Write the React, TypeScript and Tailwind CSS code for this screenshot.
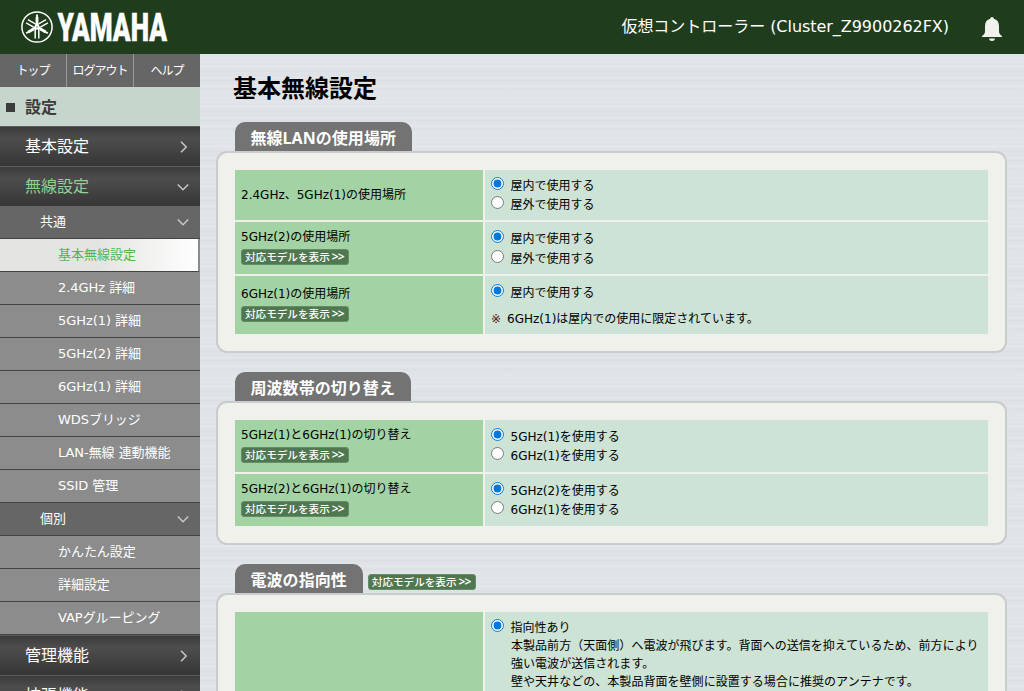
import { useState } from 'react'

const subMenu = ['基本無線設定', '2.4GHz 詳細', '5GHz(1) 詳細', '5GHz(2) 詳細', '6GHz(1) 詳細', 'WDSブリッジ', 'LAN-無線 連動機能', 'SSID 管理']
const subMenu2 = ['かんたん設定', '詳細設定', 'VAPグルーピング']

function Logo() {
  return (
    <div className="flex items-center">
      <svg width="32" height="32" viewBox="0 0 32 32" fill="none" stroke="#fff">
        <circle cx="16" cy="16" r="15.100" strokeWidth="1.500" />
        {/* three crossed tuning forks */}
        {[0, 120, 240].map((a) => (
          <g key={a} transform={`rotate(${a} 16 16)`}>
            <path d="M16 3.500V15" strokeWidth="1.900" />
            <path d="M16 6v6" strokeWidth="2.800" />
            <path d="M14.200 27.500V15.500q1.800-2 3.600 0v12" strokeWidth="1.500" />
          </g>
        ))}
        <circle cx="16" cy="16" r="1.500" strokeWidth="1" />
      </svg>
      <svg width="114" height="54" viewBox="0 0 114 54" className="ml-1">
        <text x="0.500" y="40.500" textLength="109.500" lengthAdjust="spacingAndGlyphs" fill="#fff" stroke="#fff" strokeWidth="0.400" fontFamily="Roboto, sans-serif" fontSize="38" fontWeight="900">YAMAHA</text>
      </svg>
    </div>
  )
}

function Chevron({ down }: { down?: boolean }) {
  return (
    <svg width="12" height="12" viewBox="0 0 12 12" fill="none" stroke="#c8c8c8" strokeWidth="1.500">
      <path d={down ? 'M0.800 3.500 6 8.700 11.200 3.500' : 'M4 0.800 9.200 6 4 11.200'} />
    </svg>
  )
}

function MainItem({ label, open }: { label: string; open?: boolean }) {
  return (
    <div className="flex h-10 shrink-0 items-center justify-between border-t border-[#5a5a5a] bg-linear-to-b from-[#3c3c3c] via-[#4d4d4d] via-30% to-[#363636] pr-[11px] pl-[25px] text-[16px] leading-6">
      <span className={open ? 'text-[#91cf94]' : 'text-white'}>{label}</span>
      <Chevron down={open} />
    </div>
  )
}

function GroupItem({ label }: { label: string }) {
  return (
    <div className="flex h-[33px] items-center justify-between border-b border-[#444] bg-[#666] pr-[11px] pl-10 text-[13px] text-white">
      <span>{label}</span>
      <Chevron down />
    </div>
  )
}

function SubItem({ label, active }: { label: string; active?: boolean }) {
  return (
    <div
      className={
        active
          ? 'flex h-[33px] items-center border-r-2 border-b border-r-[#8c8c8c] border-b-[#444] bg-linear-to-r from-[#e4e4e2] from-50% to-white pl-[58px] text-[13px] text-[#4fb84f]'
          : 'flex h-[33px] items-center border-b border-[#444] bg-[#8c8c8c] pl-[58px] text-[13px] tracking-[-0.05px] text-white'
      }
    >
      {label}
    </div>
  )
}

function ModelButton() {
  return (
    <button className="flex h-4 w-[108px] items-center rounded-[3px] border border-[#658d65] bg-[#507850] pl-[3px] text-[10.6px] leading-none font-medium whitespace-nowrap text-white">
      対応モデルを表示
      <span className="ml-[2px] font-['Noto_Sans',sans-serif] text-[12px] font-semibold tracking-[-0.9px]">&gt;&gt;</span>
    </button>
  )
}

function Section({ title, button, className, children }: { title: string; button?: boolean; className: string; children: React.ReactNode }) {
  return (
    <section className={className}>
      <div className="ml-[19px] flex h-[29px]">
        <h2 className="rounded-t-[10px] bg-[#737373] pr-4 pl-[15.5px] font-['Noto_Sans','Noto_Sans_CJK_JP',sans-serif] text-[16px] leading-[32px] font-bold tracking-[0.05px] text-white">{title}</h2>
        {button && (
          <div className="mt-[10px] ml-[5px]">
            <ModelButton />
          </div>
        )}
      </div>
      <div className="rounded-[11px] border-2 border-[#c8cccd] bg-[#f1f1eb] p-[17px]">
        <div className="flex flex-col gap-[2px]">{children}</div>
      </div>
    </section>
  )
}

function Row({ label, button, height, children }: { label: string; button?: boolean; height: string; children: React.ReactNode }) {
  return (
    <div className={`flex gap-[2px] text-[12px] ${height}`}>
      <div className={`flex w-[248px] flex-col justify-center gap-[3px] bg-[#a3d3a4] pl-[6px] leading-[18px] ${button ? 'pb-[3px]' : ''}`}>
        {label && <span>{label}</span>}
        {button && <ModelButton />}
      </div>
      <div className="flex flex-1 flex-col justify-center bg-[#cce3d5] pt-[2px] pl-[6px]">{children}</div>
    </div>
  )
}

function Radio({ name, label, checked, onChange }: { name: string; label: string; checked: boolean; onChange: () => void }) {
  return (
    <label className="flex h-[19px] items-start">
      <input type="radio" name={name} checked={checked} onChange={onChange} className="m-0 size-[13px] accent-[#0078d7]" />
      <span className="ml-[6.5px] leading-[18px]">{label}</span>
    </label>
  )
}

function RadioPair({ name, options, wide }: { name: string; options: string[]; wide?: boolean }) {
  const [value, setValue] = useState(options[0])
  return (
    <div className={wide ? 'flex flex-col gap-px pt-px' : 'flex flex-col'}>
      {options.map((o) => (
        <Radio key={o} name={name} label={o} checked={value === o} onChange={() => setValue(o)} />
      ))}
    </div>
  )
}

export default function App() {
  return (
    <div className="flex h-[691px] w-[1024px] flex-col overflow-hidden font-['DejaVu_Sans','Noto_Sans_CJK_JP',sans-serif] text-black">
      <header className="flex h-[54px] shrink-0 items-center justify-between bg-[#1f3d1c] pr-[22px] pl-[21px]">
        <Logo />
        <div className="flex items-center">
          <span className="text-[16px] leading-6 tracking-[-0.04px] text-white">仮想コントローラー (Cluster_Z9900262FX)</span>
          <svg width="20" height="25" viewBox="0 0 20 25" fill="#f1f1eb" className="mt-[5px] ml-[33px]">
            <path d="M10 0c1 0 1.700.7 1.800 1.800C15.300 2.600 17 5.400 17 9v5c0 2.500 1 3.500 3 5v1H0v-1c2-1.500 3-2.500 3-5V9c0-3.600 1.700-6.400 5.200-7.200C8.300.7 9 0 10 0zM7 21.500h6c-.3 1.700-1.300 2.500-3 2.500s-2.700-.8-3-2.500z" />
          </svg>
        </div>
      </header>

      <div className="flex min-h-0 flex-1">
        <nav className="w-[200px] shrink-0">
          <div className="flex h-[33px] divide-x divide-[#999] bg-[#666] text-[12px] leading-[34px] text-white">
            <a className="w-[67px] text-center tracking-[-1px]">トップ</a>
            <a className="w-[67px] text-center tracking-[-1px]">ログアウト</a>
            <a className="w-[66px] text-center tracking-[-1px]">ヘルプ</a>
          </div>
          <div className="flex h-[39px] items-center bg-[#c6d6cc] pt-[2px] pl-[6px] text-[16px] font-bold text-[#3c3c3c]">
            <span className="mr-[10px] size-[9px] bg-[#3c3c3c]" />
            設定
          </div>
          <MainItem label="基本設定" />
          <MainItem label="無線設定" open />
          <GroupItem label="共通" />
          {subMenu.map((s, i) => (
            <SubItem key={s} label={s} active={i === 0} />
          ))}
          <GroupItem label="個別" />
          {subMenu2.map((s) => (
            <SubItem key={s} label={s} />
          ))}
          <MainItem label="管理機能" />
          <MainItem label="拡張機能" />
        </nav>

        {/* brushed metal backdrop, repeats every 40px */}
        <main className="flex-1 bg-[#dfe2e6] bg-[repeating-linear-gradient(180deg,#e2e5e8_0px,#e0e3e7_3px,#e7e9ec_4px,#dfe2e6_5px,#e2e5e9_8px,#dfe2e6_11px,#e9ebee_12px,#e2e5e8_13px,#e1e4e7_16px,#dadde1_17px,#e0e3e6_18px,#dee1e5_22px,#e4e7ea_24px,#dfe2e6_25px,#dce0e4_27px,#e0e3e7_28px,#dfe2e6_31px,#e9ebee_32px,#dfe2e6_33px,#dde0e4_36px,#e1e4e8_38px,#e2e5e8_40px)] pr-[17px] pl-4">
          <h1 className="mt-[17px] ml-[17px] text-[24px] leading-9 font-bold">基本無線設定</h1>

          <Section title="無線LANの使用場所" className="mt-[15px]">
            <Row label="2.4GHz、5GHz(1)の使用場所" height="h-[50px]">
              <RadioPair name="place24" options={['屋内で使用する', '屋外で使用する']} />
            </Row>
            <Row label="5GHz(2)の使用場所" button height="h-[52px]">
              <RadioPair name="place52" options={['屋内で使用する', '屋外で使用する']} wide />
            </Row>
            <Row label="6GHz(1)の使用場所" button height="h-[58px]">
              <RadioPair name="place61" options={['屋内で使用する']} />
              <p className="mt-[7px] leading-[18px]">
                <span className="mr-[6px] text-[#5a1414]">※</span>
                <span>6GHz(1)は屋内での使用に限定されています。</span>
              </p>
            </Row>
          </Section>

          <Section title="周波数帯の切り替え" className="mt-[19px]">
            <Row label="5GHz(1)と6GHz(1)の切り替え" button height="h-[52px]">
              <RadioPair name="band1" options={['5GHz(1)を使用する', '6GHz(1)を使用する']} />
            </Row>
            <Row label="5GHz(2)と6GHz(1)の切り替え" button height="h-[52px]">
              <RadioPair name="band2" options={['5GHz(2)を使用する', '6GHz(1)を使用する']} />
            </Row>
          </Section>

          <Section title="電波の指向性" button className="mt-[19px]">
            <Row label="" height="h-[160px]">
              <div className="h-full pt-[5px]">
                <RadioPair name="direction" options={['指向性あり']} />
                <p className="-mt-px ml-5 leading-[18px] tracking-[0.04px]">
                  本製品前方（天面側）へ電波が飛びます。背面への送信を抑えているため、前方により
                  <br />
                  強い電波が送信されます。
                  <br />
                  壁や天井などの、本製品背面を壁側に設置する場合に推奨のアンテナです。
                </p>
              </div>
            </Row>
          </Section>
        </main>
      </div>
    </div>
  )
}
